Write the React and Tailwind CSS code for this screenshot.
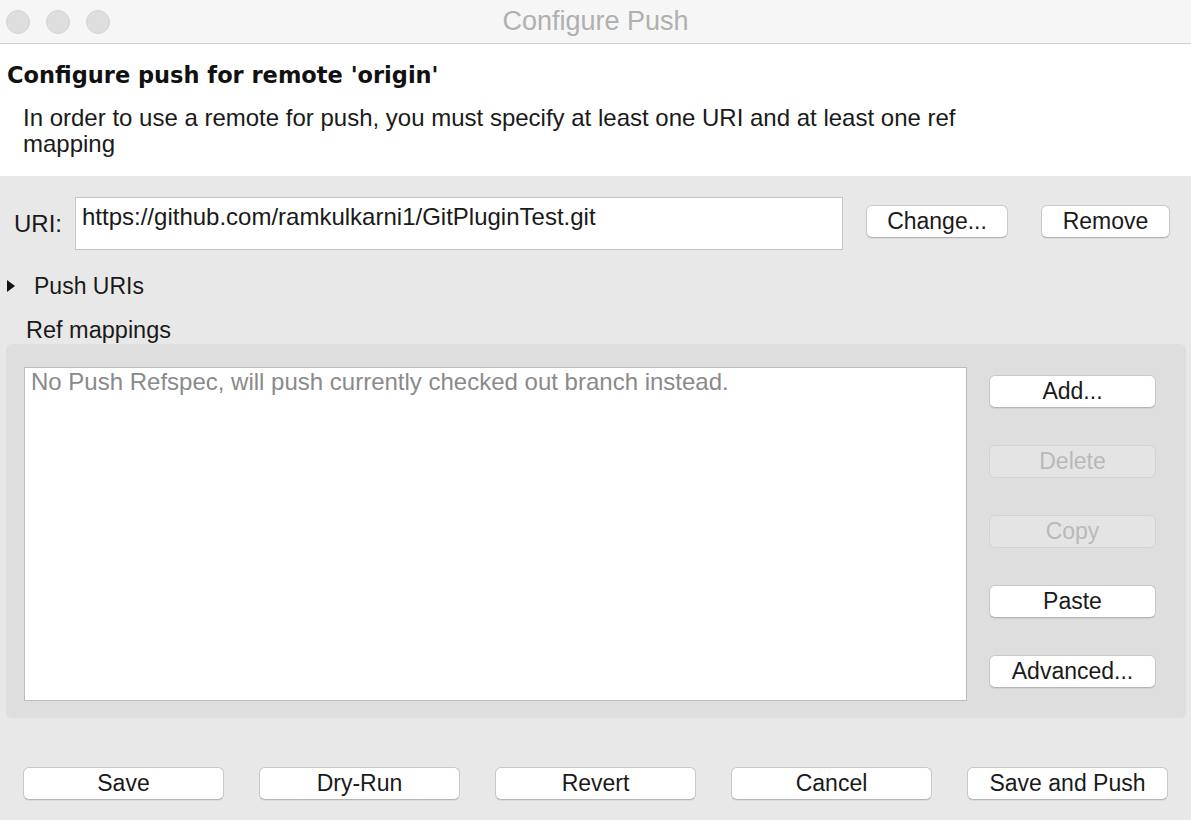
import React from "react";

function Btn({ children, disabled, className = "" }) {
  return (
    <div
      className={
        "flex h-[33px] items-center justify-center rounded-[6px] border text-[23px] leading-none " +
        (disabled
          ? "border-[#d2d2d2] bg-[#e4e4e4] text-[#b9b9b9] "
          : "border-[#c8c8c8] border-b-[#b5b5b5] bg-white text-[#1a1a1a] shadow-[0_1px_0_rgba(0,0,0,0.06)] ") +
        className
      }
    >
      {children}
    </div>
  );
}

export default function App() {
  return (
    <div
      className="flex h-[820px] w-[1191px] flex-col overflow-hidden bg-[#e8e8e8] text-[#1a1a1a]"
      style={{ fontFamily: '"Liberation Sans", Arial, sans-serif' }}
    >
      {/* Title bar */}
      <div className="grid h-[44px] shrink-0 grid-cols-[1fr_auto_1fr] items-center border-b border-[#cfcfcf] bg-[#f6f6f6]">
        <div className="flex items-center gap-[16px] pl-[6px]">
          <div className="h-[24px] w-[24px] rounded-full border border-[#d3d3d3] bg-[#dedede]" />
          <div className="h-[24px] w-[24px] rounded-full border border-[#d3d3d3] bg-[#dedede]" />
          <div className="h-[24px] w-[24px] rounded-full border border-[#d3d3d3] bg-[#dedede]" />
        </div>
        <div className="text-[27px] leading-none text-[#b0b0b0]">Configure Push</div>
        <div />
      </div>

      {/* Header */}
      <div className="h-[132px] shrink-0 bg-white pt-[18px]">
        <div
          className="pl-[7px] text-[22.5px] font-bold leading-[26px] text-[#111]"
          style={{ fontFamily: '"DejaVu Sans", "Liberation Sans", sans-serif' }}
        >
          Configure push for remote 'origin'
        </div>
        <div className="mt-[17px] pl-[23px] text-[24px] leading-[26px] text-[#1a1a1a]">
          In order to use a remote for push, you must specify at least one URI and at least one ref
          <br />
          mapping
        </div>
      </div>

      {/* Body */}
      <div className="flex flex-1 flex-col pt-[21px]">
        <div className="flex items-center">
          <div className="w-[75px] pl-[14px] text-[24px]">URI:</div>
          <div className="h-[53px] w-[768px] border border-[#c4c4c4] bg-white pl-[6px] pt-[6px] text-[24px] leading-[26px]">
            https://github.com/ramkulkarni1/GitPluginTest.git
          </div>
          <Btn className="ml-[23px] w-[142px] -translate-y-[2px]">Change...</Btn>
          <Btn className="ml-[33px] w-[129px] -translate-y-[2px]">Remove</Btn>
        </div>

        <div className="mt-[24px] flex h-[24px] items-center">
          <svg width="8" height="12" viewBox="0 0 8 12" className="ml-[7px]">
            <path d="M0 0 L8 6 L0 12 Z" fill="#111" />
          </svg>
          <span className="ml-[19px] text-[23px]">Push URIs</span>
        </div>

        <div className="mt-[20px] h-[24px] pl-[26px] text-[23.5px] leading-[24px]">Ref mappings</div>

        <div className="mx-[6px] mt-[2px] flex w-[1180px] rounded-[6px] bg-[#dedede] pb-[17px] pl-[18px] pr-[30px] pt-[23px]">
          <div className="h-[334px] w-[943px] border border-[#bdbdbd] bg-white px-[6px] pt-[1px] text-[24px] leading-[26px] text-[#8a8a8a]">
            No Push Refspec, will push currently checked out branch instead.
          </div>
          <div className="ml-[22px] flex w-[167px] flex-col gap-[37px] pt-[8px]">
            <Btn>Add...</Btn>
            <Btn disabled>Delete</Btn>
            <Btn disabled>Copy</Btn>
            <Btn>Paste</Btn>
            <Btn>Advanced...</Btn>
          </div>
        </div>

        <div className="mt-[49px] flex gap-[35px] pl-[23px]">
          <Btn className="w-[201px]">Save</Btn>
          <Btn className="w-[201px]">Dry-Run</Btn>
          <Btn className="w-[201px]">Revert</Btn>
          <Btn className="w-[201px]">Cancel</Btn>
          <Btn className="w-[201px]">Save and Push</Btn>
        </div>
      </div>
    </div>
  );
}
